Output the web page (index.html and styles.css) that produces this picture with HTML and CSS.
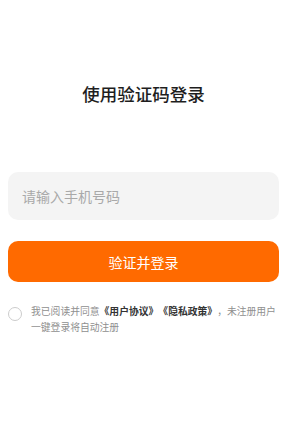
FILE: index.html
```html
<!DOCTYPE html>
<html lang="zh-CN">
<head>
    <meta charset="UTF-8">
    <meta name="viewport" content="width=device-width, initial-scale=1.0">
    <title>验证码登录</title>
    <link rel="stylesheet" href="styles.css">
</head>
<body>
    <div class="login">
        <h1 class="login-title">使用验证码登录</h1>

        <form class="login-form">
            <input type="tel" class="phone-input" placeholder="请输入手机号码">
            <button type="button" class="submit-btn">验证并登录</button>
        </form>

        <div class="agreement">
            <span class="check"></span>
            <p class="agreement-text">我已阅读并同意<b>《用户协议》《隐私政策》</b>，未注册用户一键登录将自动注册</p>
        </div>
    </div>
</body>
</html>
```

FILE: styles.css
```css
body {
    margin: 0;
    background-color: #ffffff;
    font-family: "Noto Sans CJK SC", "Noto Sans", sans-serif;
    color: #222222;
}
.login {
    padding: 0 8px;
}
.login-title {
    margin: 82px 0 0;
    font-size: 17.5px;
    line-height: 24px;
    font-weight: 500;
    text-align: center;
    color: #1e1e1e;
}
.login-form {
    margin-top: 66px;
    display: flex;
    flex-direction: column;
    gap: 21px;
}
.phone-input {
    box-sizing: border-box;
    height: 48px;
    padding: 0 14px;
    border: none;
    border-radius: 10px;
    background-color: #f4f4f4;
    font-family: inherit;
    font-size: 14px;
    outline: none;
}
.phone-input::placeholder {
    color: #a9a9a9;
}
.submit-btn {
    height: 41px;
    border: none;
    border-radius: 10px;
    background-color: #ff6a00;
    color: #ffffff;
    font-family: inherit;
    font-size: 14px;
    cursor: pointer;
}
.agreement {
    margin-top: 21px;
    display: flex;
    align-items: flex-start;
    gap: 9px;
}
.check {
    flex: none;
    box-sizing: border-box;
    width: 14px;
    height: 14px;
    margin-top: 4px;
    border: 1px solid #cccccc;
    border-radius: 50%;
}
.agreement-text {
    margin: 0;
    font-size: 9.8px;
    line-height: 16px;
    color: #8f8f8f;
    text-spacing-trim: space-all;
}
.agreement-text b {
    color: #333333;
}
```
